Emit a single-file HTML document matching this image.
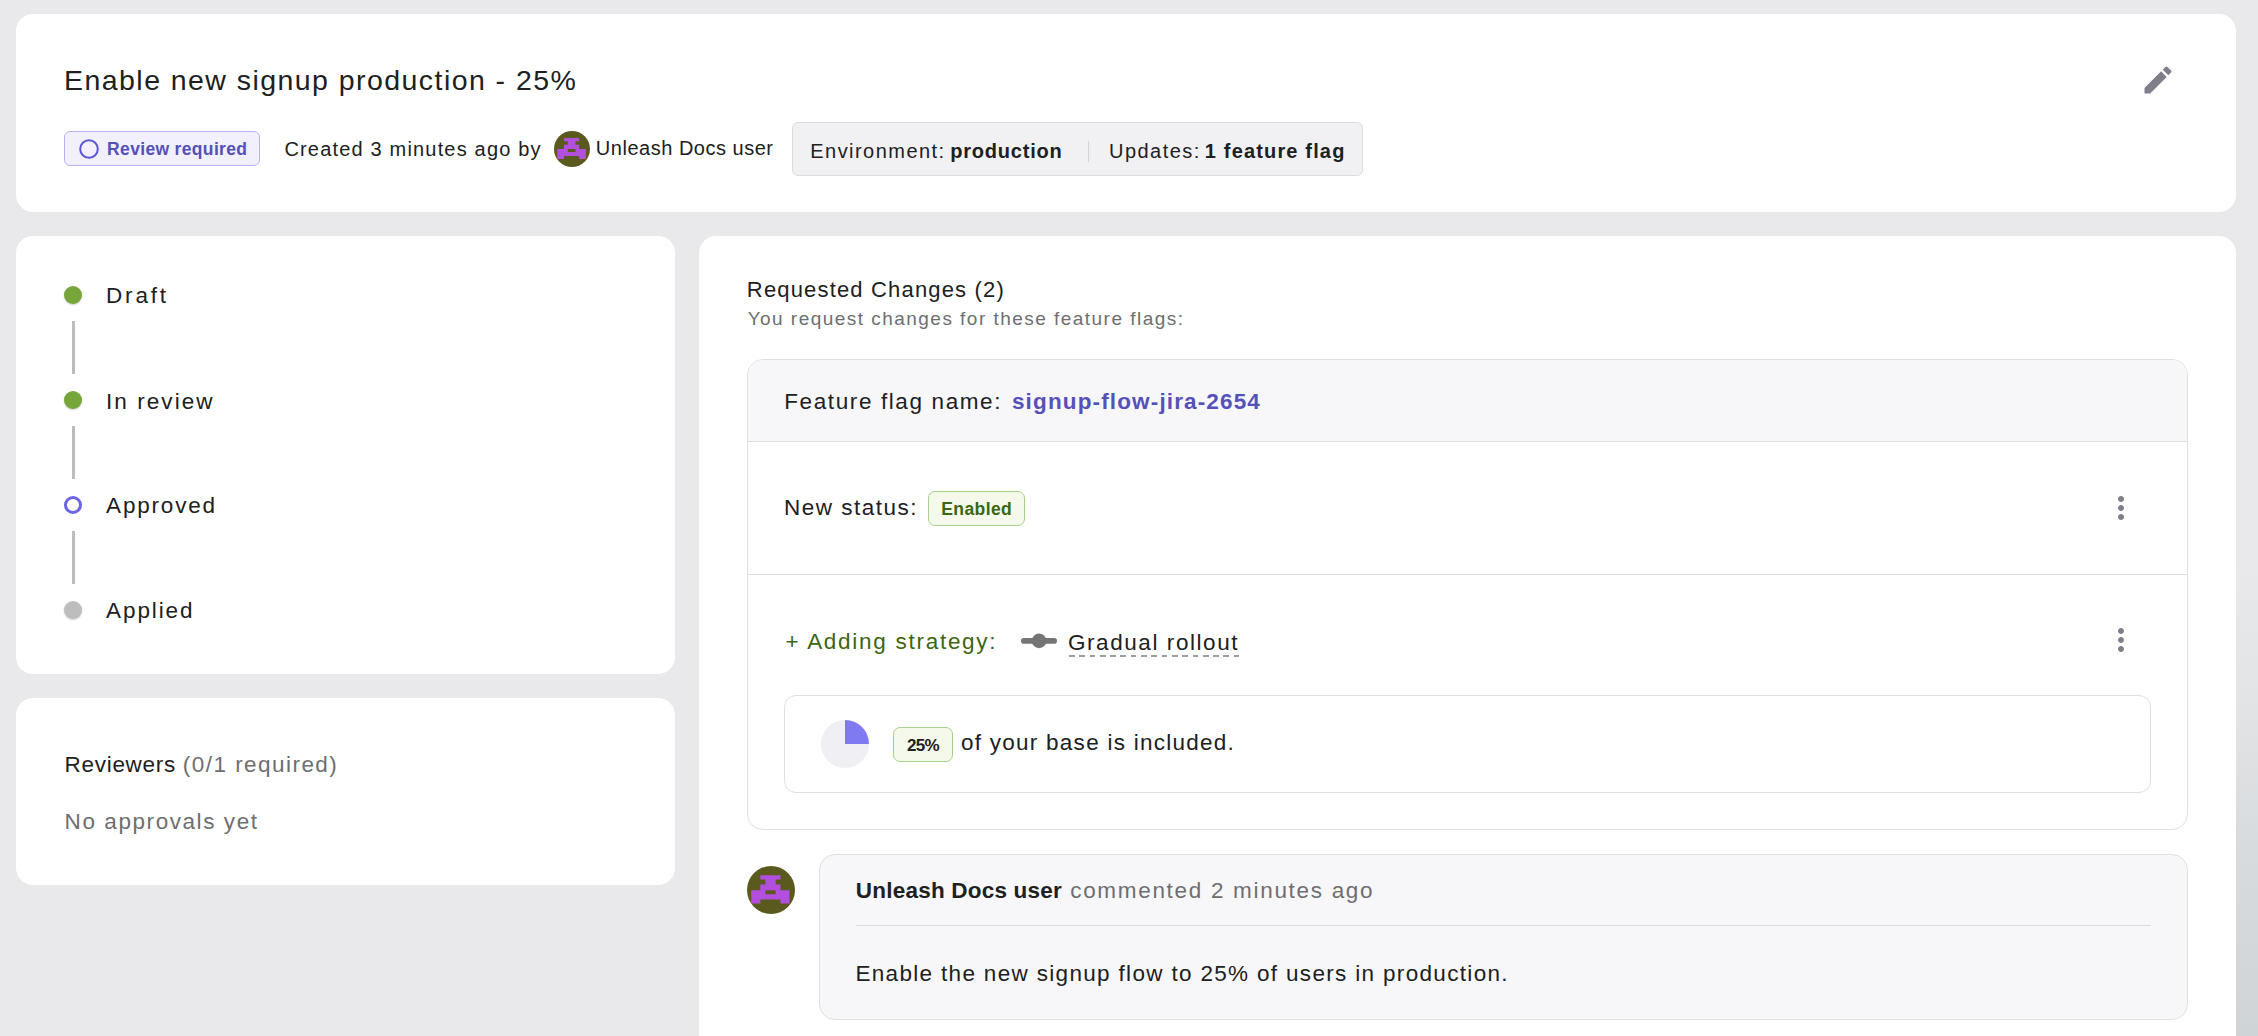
<!DOCTYPE html>
<html><head><meta charset="utf-8"><style>
*{margin:0;padding:0;box-sizing:border-box}
html,body{width:2258px;height:1036px;overflow:hidden;background:#e9e9ec;font-family:"Liberation Sans",sans-serif}
.ab{position:absolute;display:block}
.t{position:absolute;white-space:pre;line-height:1}
.card{position:absolute;background:#fff;border-radius:17px}
.strip{position:absolute;left:2236px;top:0;width:22px;height:1036px;background:linear-gradient(180deg,#e9e9ec 0px,#e9e9ec 560px,#e2e4e6 700px,#d8dbdd 850px,#cfd4d6 1036px)}
</style></head><body>
<div class="strip"></div>
<div class="card" style="left:16px;top:14px;width:2220px;height:198px"></div>
<div class="card" style="left:16px;top:236px;width:659px;height:438px"></div>
<div class="card" style="left:16px;top:698px;width:659px;height:187px"></div>
<div class="card" style="left:699px;top:236px;width:1537px;height:900px"></div>

<!-- review badge -->
<div class="ab" style="left:64px;top:131px;width:196px;height:35px;background:#f1f0fc;border:1px solid #b6b2f3;border-radius:6px"></div>
<svg class="ab" style="left:78px;top:138px;width:22px;height:22px" viewBox="0 0 22 22"><circle cx="11" cy="11" r="8.8" fill="none" stroke="#5d57d8" stroke-width="2"/></svg>
<svg class="ab" style="left:554px;top:131px;width:36px;height:36px" viewBox="0 0 36 36"><circle cx="18" cy="18" r="18" fill="#5b5a1e"/><path fill="#b34fdf" d="M10 7H25.1V10.2H21.5V13.8H25.1V18.1H31.9V28.1H25.1V25.1H10V28.1H3.2V18.1H10V13.8H13.8V10.2H10ZM13.8 18.1V21.1H21.5V18.1Z" fill-rule="evenodd"/></svg>
<!-- env box -->
<div class="ab" style="left:792px;top:122px;width:571px;height:54px;background:#f1f1f4;border:1px solid #dcdce0;border-radius:6px"></div>
<div class="ab" style="left:1088px;top:141px;width:1px;height:21px;background:#d3d3d8"></div>
<!-- pencil -->
<svg class="ab" style="left:2140px;top:62px;width:36px;height:36px" viewBox="0 0 24 24"><path fill="#7f7f89" d="M3 17.25V21h3.75L17.81 9.94l-3.75-3.75L3 17.25zM20.71 7.04c.39-.39.39-1.02 0-1.41l-2.34-2.34a.9959.9959 0 0 0-1.41 0l-1.83 1.83 3.75 3.75 1.83-1.83z"/></svg>

<!-- timeline -->
<div class="ab" style="left:64px;top:286px;width:18px;height:18px;border-radius:50%;background:#76a539;box-shadow:0 1px 2px rgba(0,0,0,.2)"></div>
<div class="ab" style="left:72px;top:321px;width:3px;height:53px;background:#bdbdbd"></div>
<div class="ab" style="left:64px;top:391px;width:18px;height:18px;border-radius:50%;background:#76a539;box-shadow:0 1px 2px rgba(0,0,0,.2)"></div>
<div class="ab" style="left:72px;top:426px;width:3px;height:53px;background:#bdbdbd"></div>
<div class="ab" style="left:64px;top:496px;width:18px;height:18px;border-radius:50%;border:3px solid #6c65e5;background:#fff"></div>
<div class="ab" style="left:72px;top:531px;width:3px;height:53px;background:#bdbdbd"></div>
<div class="ab" style="left:64px;top:601px;width:18px;height:18px;border-radius:50%;background:#bdbdbd;box-shadow:0 1px 2px rgba(0,0,0,.2)"></div>

<!-- flag card -->
<div class="ab" style="left:747px;top:359px;width:1441px;height:471px;border:1px solid #e0e0e3;border-radius:16px;overflow:hidden;background:#fff">
  <div class="ab" style="left:0;top:0;width:1441px;height:82px;background:#f7f7fa;border-bottom:1px solid #e0e0e3"></div>
  <div class="ab" style="left:0;top:214px;width:1441px;height:1px;background:#e0e0e3"></div>
</div>
<div class="ab" style="left:928px;top:491px;width:97px;height:35px;background:#f4f9ec;border:1px solid #a9d08b;border-radius:7px"></div>
<svg class="ab" style="left:2103px;top:490px;width:36px;height:36px" viewBox="0 0 24 24"><path fill="#7f7f89" d="M12 8c1.1 0 2-.9 2-2s-.9-2-2-2-2 .9-2 2 .9 2 2 2zm0 2c-1.1 0-2 .9-2 2s.9 2 2 2 2-.9 2-2-.9-2-2-2zm0 6c-1.1 0-2 .9-2 2s.9 2 2 2 2-.9 2-2-.9-2-2-2z"/></svg>
<svg class="ab" style="left:2103px;top:622px;width:36px;height:36px" viewBox="0 0 24 24"><path fill="#7f7f89" d="M12 8c1.1 0 2-.9 2-2s-.9-2-2-2-2 .9-2 2 .9 2 2 2zm0 2c-1.1 0-2 .9-2 2s.9 2 2 2 2-.9 2-2-.9-2-2-2zm0 6c-1.1 0-2 .9-2 2s.9 2 2 2 2-.9 2-2-.9-2-2-2z"/></svg>
<!-- rollout icon -->
<svg class="ab" style="left:1015px;top:625px;width:50px;height:32px" viewBox="0 0 50 32"><rect x="6" y="13.1" width="36" height="5.6" rx="2.8" fill="#757577"/><circle cx="24.1" cy="15.9" r="7.3" fill="#757577"/></svg>
<div class="ab" style="left:1069px;top:655px;width:170px;height:2px;background:repeating-linear-gradient(90deg,#9d9da0 0,#9d9da0 5.7px,transparent 5.7px,transparent 10.3px)"></div>
<!-- inner box -->
<div class="ab" style="left:784px;top:695px;width:1367px;height:98px;border:1px solid #e0e0e3;border-radius:12px"></div>
<svg class="ab" style="left:821px;top:720px;width:48px;height:48px" viewBox="0 0 48 48"><circle cx="24" cy="24" r="24" fill="#f0f0f4"/><path d="M24 24V0A24 24 0 0 1 48 24Z" fill="#807af2"/></svg>
<div class="ab" style="left:893px;top:727px;width:60px;height:35px;background:#f4f9ec;border:1px solid #a9d08b;border-radius:7px"></div>

<!-- comment -->
<svg class="ab" style="left:747px;top:866px;width:48px;height:48px" viewBox="0 0 36 36"><circle cx="18" cy="18" r="18" fill="#5b5a1e"/><path fill="#b34fdf" d="M10 7H25.1V10.2H21.5V13.8H25.1V18.1H31.9V28.1H25.1V25.1H10V28.1H3.2V18.1H10V13.8H13.8V10.2H10ZM13.8 18.1V21.1H21.5V18.1Z" fill-rule="evenodd"/></svg>
<div class="ab" style="left:819px;top:854px;width:1369px;height:166px;background:#f7f7fa;border:1px solid #e0e0e3;border-radius:16px"></div>
<div class="ab" style="left:856px;top:925px;width:1295px;height:1px;background:#dcdce0"></div>

<div class="t" style="left:64.04px;top:65.87px;font-size:28.5px;letter-spacing:1.441px;color:#202021;">Enable new signup production - 25%</div>
<div class="t" style="left:107.08px;top:141.27px;font-size:17.5px;letter-spacing:0.339px;color:#5650b9;font-weight:700;">Review required</div>
<div class="t" style="left:284.42px;top:139.11px;font-size:20px;letter-spacing:1.178px;color:#202021;">Created 3 minutes ago by</div>
<div class="t" style="left:595.86px;top:137.77px;font-size:20px;letter-spacing:0.512px;color:#202021;">Unleash Docs user</div>
<div class="t" style="left:810.28px;top:140.83px;font-size:20px;letter-spacing:1.457px;color:#202021;">Environment:</div>
<div class="t" style="left:950.20px;top:140.83px;font-size:20px;letter-spacing:0.797px;color:#202021;font-weight:700;">production</div>
<div class="t" style="left:1109.08px;top:140.83px;font-size:20px;letter-spacing:1.450px;color:#202021;">Updates:</div>
<div class="t" style="left:1204.86px;top:140.83px;font-size:20px;letter-spacing:1.155px;color:#202021;font-weight:700;">1 feature flag</div>
<div class="t" style="left:106.06px;top:285.21px;font-size:22.5px;letter-spacing:2.828px;color:#202021;">Draft</div>
<div class="t" style="left:106.06px;top:390.71px;font-size:22.5px;letter-spacing:2.059px;color:#202021;">In review</div>
<div class="t" style="left:106.10px;top:495.21px;font-size:22.5px;letter-spacing:1.806px;color:#202021;">Approved</div>
<div class="t" style="left:106.10px;top:600.05px;font-size:22.5px;letter-spacing:1.888px;color:#202021;">Applied</div>
<div class="t" style="left:64.62px;top:753.67px;font-size:22.5px;letter-spacing:0.696px;color:#202021;">Reviewers</div>
<div class="t" style="left:182.86px;top:753.67px;font-size:22.5px;letter-spacing:1.453px;color:#6e6e70;">(0/1 required)</div>
<div class="t" style="left:64.62px;top:810.71px;font-size:22.5px;letter-spacing:1.569px;color:#6e6e70;">No approvals yet</div>
<div class="t" style="left:746.84px;top:279.46px;font-size:22px;letter-spacing:1.168px;color:#202021;">Requested Changes (2)</div>
<div class="t" style="left:747.64px;top:309.32px;font-size:19px;letter-spacing:1.469px;color:#6e6e70;">You request changes for these feature flags:</div>
<div class="t" style="left:784.18px;top:390.65px;font-size:22.5px;letter-spacing:1.616px;color:#202021;">Feature flag name:</div>
<div class="t" style="left:1011.98px;top:390.99px;font-size:22.5px;letter-spacing:1.142px;color:#5650b9;font-weight:700;">signup-flow-jira-2654</div>
<div class="t" style="left:784.06px;top:497.49px;font-size:22.5px;letter-spacing:1.501px;color:#202021;">New status:</div>
<div class="t" style="left:941.30px;top:500.75px;font-size:17.5px;letter-spacing:0.392px;color:#3c6610;font-weight:700;">Enabled</div>
<div class="t" style="left:785.54px;top:630.75px;font-size:22.5px;letter-spacing:1.724px;color:#3c6610;">+ Adding strategy:</div>
<div class="t" style="left:1067.96px;top:631.63px;font-size:22.5px;letter-spacing:1.571px;color:#202021;">Gradual rollout</div>
<div class="t" style="left:907.00px;top:737.17px;font-size:17px;letter-spacing:-0.745px;color:#202021;font-weight:700;">25%</div>
<div class="t" style="left:960.98px;top:732.15px;font-size:22.5px;letter-spacing:1.259px;color:#202021;">of your base is included.</div>
<div class="t" style="left:855.86px;top:879.79px;font-size:22.5px;letter-spacing:0.208px;color:#202021;font-weight:700;">Unleash Docs user</div>
<div class="t" style="left:1070.20px;top:879.79px;font-size:22.5px;letter-spacing:1.692px;color:#6e6e70;">commented 2 minutes ago</div>
<div class="t" style="left:855.40px;top:962.75px;font-size:22.5px;letter-spacing:1.328px;color:#202021;">Enable the new signup flow to 25% of users in production.</div>
</body></html>
